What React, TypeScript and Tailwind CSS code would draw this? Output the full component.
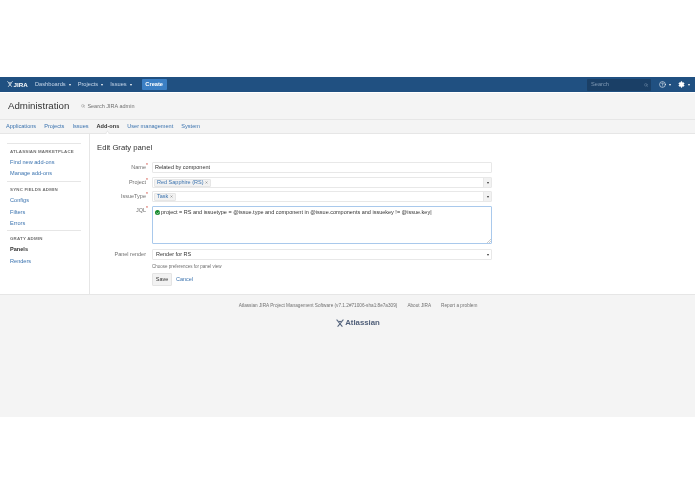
import React from "react";
import { Search, Settings, HelpCircle, Check, X } from "lucide-react";

const Caret = ({ className = "border-t-white" }: { className?: string }) => (
  <span className={`inline-block w-0 h-0 border-x-[1.5px] border-x-transparent border-t-[2px] ml-[3px] align-middle ${className}`} />
);

const Logo = ({ size, color }: { size: number; color: string }) => (
  <svg width={size} height={size} viewBox="0 0 10 10" fill="none" stroke={color} strokeWidth="1.3" className="shrink-0">
    <path d="M1 0.6C1.4 4 8.6 4 9 0.6" />
    <path d="M2 9.6L7.2 3.4M8 9.6L2.8 3.4" />
  </svg>
);

const Label = ({ text, req }: { text: string; req?: boolean }) => (
  <div className="w-[49px] text-right text-[5.5px] leading-[9px] text-[#707070] shrink-0 relative">
    {text}
    {req && <span className="absolute right-[-2px] top-[-2px] text-[#d04437] text-[5px]">*</span>}
  </div>
);

const Tag = ({ text }: { text: string }) => (
  <span className="inline-flex items-center h-[8px] px-[2px] bg-[#f2f2f2] border border-[#e6e6e6] rounded-[1px] text-[5.5px] text-[#3b73af]">
    {text}
    <X size={3} strokeWidth={3} className="ml-[2px] text-[#555]" />
  </span>
);

const Picker = ({ text }: { text: string }) => (
  <div className="flex w-[340px] h-[11px] border border-[#e8e8e8] bg-white rounded-[1px]">
    <div className="flex-1 flex items-center pl-[1px]"><Tag text={text} /></div>
    <div className="w-[8px] bg-[#f2f2f2] border-l border-[#e8e8e8] flex items-center justify-center pr-[3px]"><Caret className="border-t-[#333]" /></div>
  </div>
);

const SideHead = ({ t }: { t: string }) => (
  <div className="text-[4.4px] leading-[8px] font-bold tracking-[0.2px] text-[#707070] uppercase pl-[3px] whitespace-nowrap">{t}</div>
);
const SideLink = ({ t, active }: { t: string; active?: boolean }) => (
  <div className={`text-[5.6px] leading-[11.4px] pl-[3px] ${active ? "font-bold text-[#333]" : "text-[#3b73af]"}`}>{t}</div>
);

export default function App() {
  return (
    <div className="w-[695px] h-[494px] bg-white overflow-hidden text-[#333] blur-[0.3px]" style={{ fontFamily: '"Liberation Sans", Arial, sans-serif' }}>
      <div className="h-[77px]" />
      <header className="h-[15px] bg-[#205081] flex items-center pl-[7px] pr-[5px] text-[5.7px] text-[#c8d8ea]">
        <div className="flex items-center font-bold text-white text-[6.2px] w-[28px]">
          <Logo size={6} color="#ffffff" /><span className="ml-[0.5px]">JIRA</span>
        </div>
        <div>Dashboards<Caret /></div>
        <div className="ml-[7px]">Projects<Caret /></div>
        <div className="ml-[7px]">Issues<Caret /></div>
        <div className="ml-[10px] h-[11px] w-[25px] bg-[#3b7fc4] rounded-[1px] flex items-center justify-center text-white font-bold">Create</div>
        <div className="ml-auto w-[64px] h-[12px] bg-[#1a3f66] rounded-[1px] flex items-center justify-between pl-[4px] pr-[3px] text-[#7f98b3]">
          Search<Search size={4} strokeWidth={2.5} />
        </div>
        <HelpCircle size={7} className="ml-[8px] text-white" /><Caret />
        <Settings size={7} className="ml-[7px] text-white" fill="white" /><Caret />
      </header>
      <div className="h-px bg-white" />
      <div className="bg-[#f4f4f4]">
        <div className="h-[27px] flex items-center pl-[8px] border-b border-[#e6e6e6]">
          <div className="text-[9.7px] text-[#333]">Administration</div>
          <div className="ml-[12px] flex items-center text-[5.5px] text-[#707070]"><Search size={4} className="mr-[2px]" />Search JIRA admin</div>
        </div>
        <div className="h-[14px] flex items-center pl-[6px] gap-[8px] text-[5.6px] text-[#3b73af] border-b border-[#e6e6e6]">
          <span>Applications</span><span>Projects</span><span>Issues</span>
          <span className="relative font-bold text-[#333]">
            Add-ons
            <span className="absolute left-[9px] top-[9px] w-[3px] h-[3px] rotate-45 bg-white border-l border-t border-[#e6e6e6]" />
          </span>
          <span>User management</span><span>System</span>
        </div>
      </div>
      <main className="h-[161px] flex bg-white border-b border-[#e6e6e6]">
        <aside className="w-[90px] border-r border-[#e6e6e6] pl-[7px] pr-[8px] pt-[9px] shrink-0">
          <div className="border-t border-[#e6e6e6] pt-[4px] pb-[1px]">
            <SideHead t="Atlassian Marketplace" />
            <div className="mt-[1px]"><SideLink t="Find new add-ons" /><SideLink t="Manage add-ons" /></div>
          </div>
          <div className="border-t border-[#e6e6e6] pt-[4px] pb-[1px]">
            <SideHead t="Sync fields admin" />
            <div className="mt-[1.3px]"><SideLink t="Configs" /><SideLink t="Filters" /><SideLink t="Errors" /></div>
          </div>
          <div className="border-t border-[#e6e6e6] pt-[3.5px]">
            <SideHead t="Graty admin" />
            <div className="mt-[1.3px]"><SideLink t="Panels" active /><SideLink t="Renders" /></div>
          </div>
        </aside>
        <section className="flex-1 pl-[7px] pt-[8px]">
          <h1 className="text-[7.7px] leading-[12px] text-[#333]">Edit Graty panel</h1>
          <div className="mt-[8px] flex flex-col">
            <div className="flex items-center gap-[6px]">
              <Label text="Name" req />
              <div className="w-[340px] h-[11px] border border-[#e8e8e8] rounded-[1px] flex items-center pl-[2px] text-[5.5px]">Related by component</div>
            </div>
            <div className="flex items-center gap-[6px] mt-[4px]"><Label text="Project" req /><Picker text="Red Sapphire (RS)" /></div>
            <div className="flex items-center gap-[6px] mt-[3px]"><Label text="IssueType" req /><Picker text="Task" /></div>
            <div className="flex items-start gap-[6px] mt-[4px]">
              <Label text="JQL" req />
              <div className="relative w-[340px] h-[38px] border border-[#a9c9ec] rounded-[1px] flex items-start pl-[2px] pt-[1px] text-[5.5px] leading-[8px]">
                <span className="w-[5px] h-[5px] mt-[2px] mr-[1px] rounded-full bg-[#14892c] flex items-center justify-center shrink-0"><Check size={4} strokeWidth={4} className="text-white" /></span>
                <span>project = RS and issuetype = @issue.type and component in @issue.components and issuekey != @issue.key|</span>
                <svg width="4" height="4" viewBox="0 0 4 4" className="absolute right-0 bottom-0" stroke="#999" strokeWidth="0.5"><path d="M0 4L4 0M2 4L4 2" /></svg>
              </div>
            </div>
            <div className="flex items-center gap-[6px] mt-[5px]">
              <Label text="Panel render" />
              <div className="w-[340px] h-[11px] border border-[#e8e8e8] rounded-[1px] flex items-center justify-between pl-[3px] pr-[2px] text-[5.5px]">Render for RS<Caret className="border-t-[#333]" /></div>
            </div>
          </div>
          <div className="ml-[55px] mt-[2.5px] text-[4.5px] leading-[8px] text-[#707070]">Choose preferences for panel view</div>
          <div className="ml-[55px] mt-[2.5px] flex items-center gap-[4px] text-[5.5px]">
            <div className="w-[20px] h-[13px] bg-[#f2f2f2] border border-[#e4e4e4] rounded-[1px] flex items-center justify-center">Save</div>
            <span className="text-[#3b73af]">Cancel</span>
          </div>
        </section>
      </main>
      <footer className="h-[122px] bg-[#f4f4f4] pl-[21px] pt-[7px] flex flex-col items-center text-[4.7px] text-[#707070]">
        <div className="flex gap-[10px] leading-[8px]">
          <span>Atlassian JIRA Project Management Software (v7.1.2#71006-sha1:8e7a309)</span>
          <span>About JIRA</span>
          <span>Report a problem</span>
        </div>
        <div className="mt-[8px] flex items-center text-[7.8px] font-bold text-[#505f79] leading-[10px]">
          <Logo size={8} color="#505f79" /><span className="ml-[1px]">Atlassian</span>
        </div>
      </footer>
    </div>
  );
}
